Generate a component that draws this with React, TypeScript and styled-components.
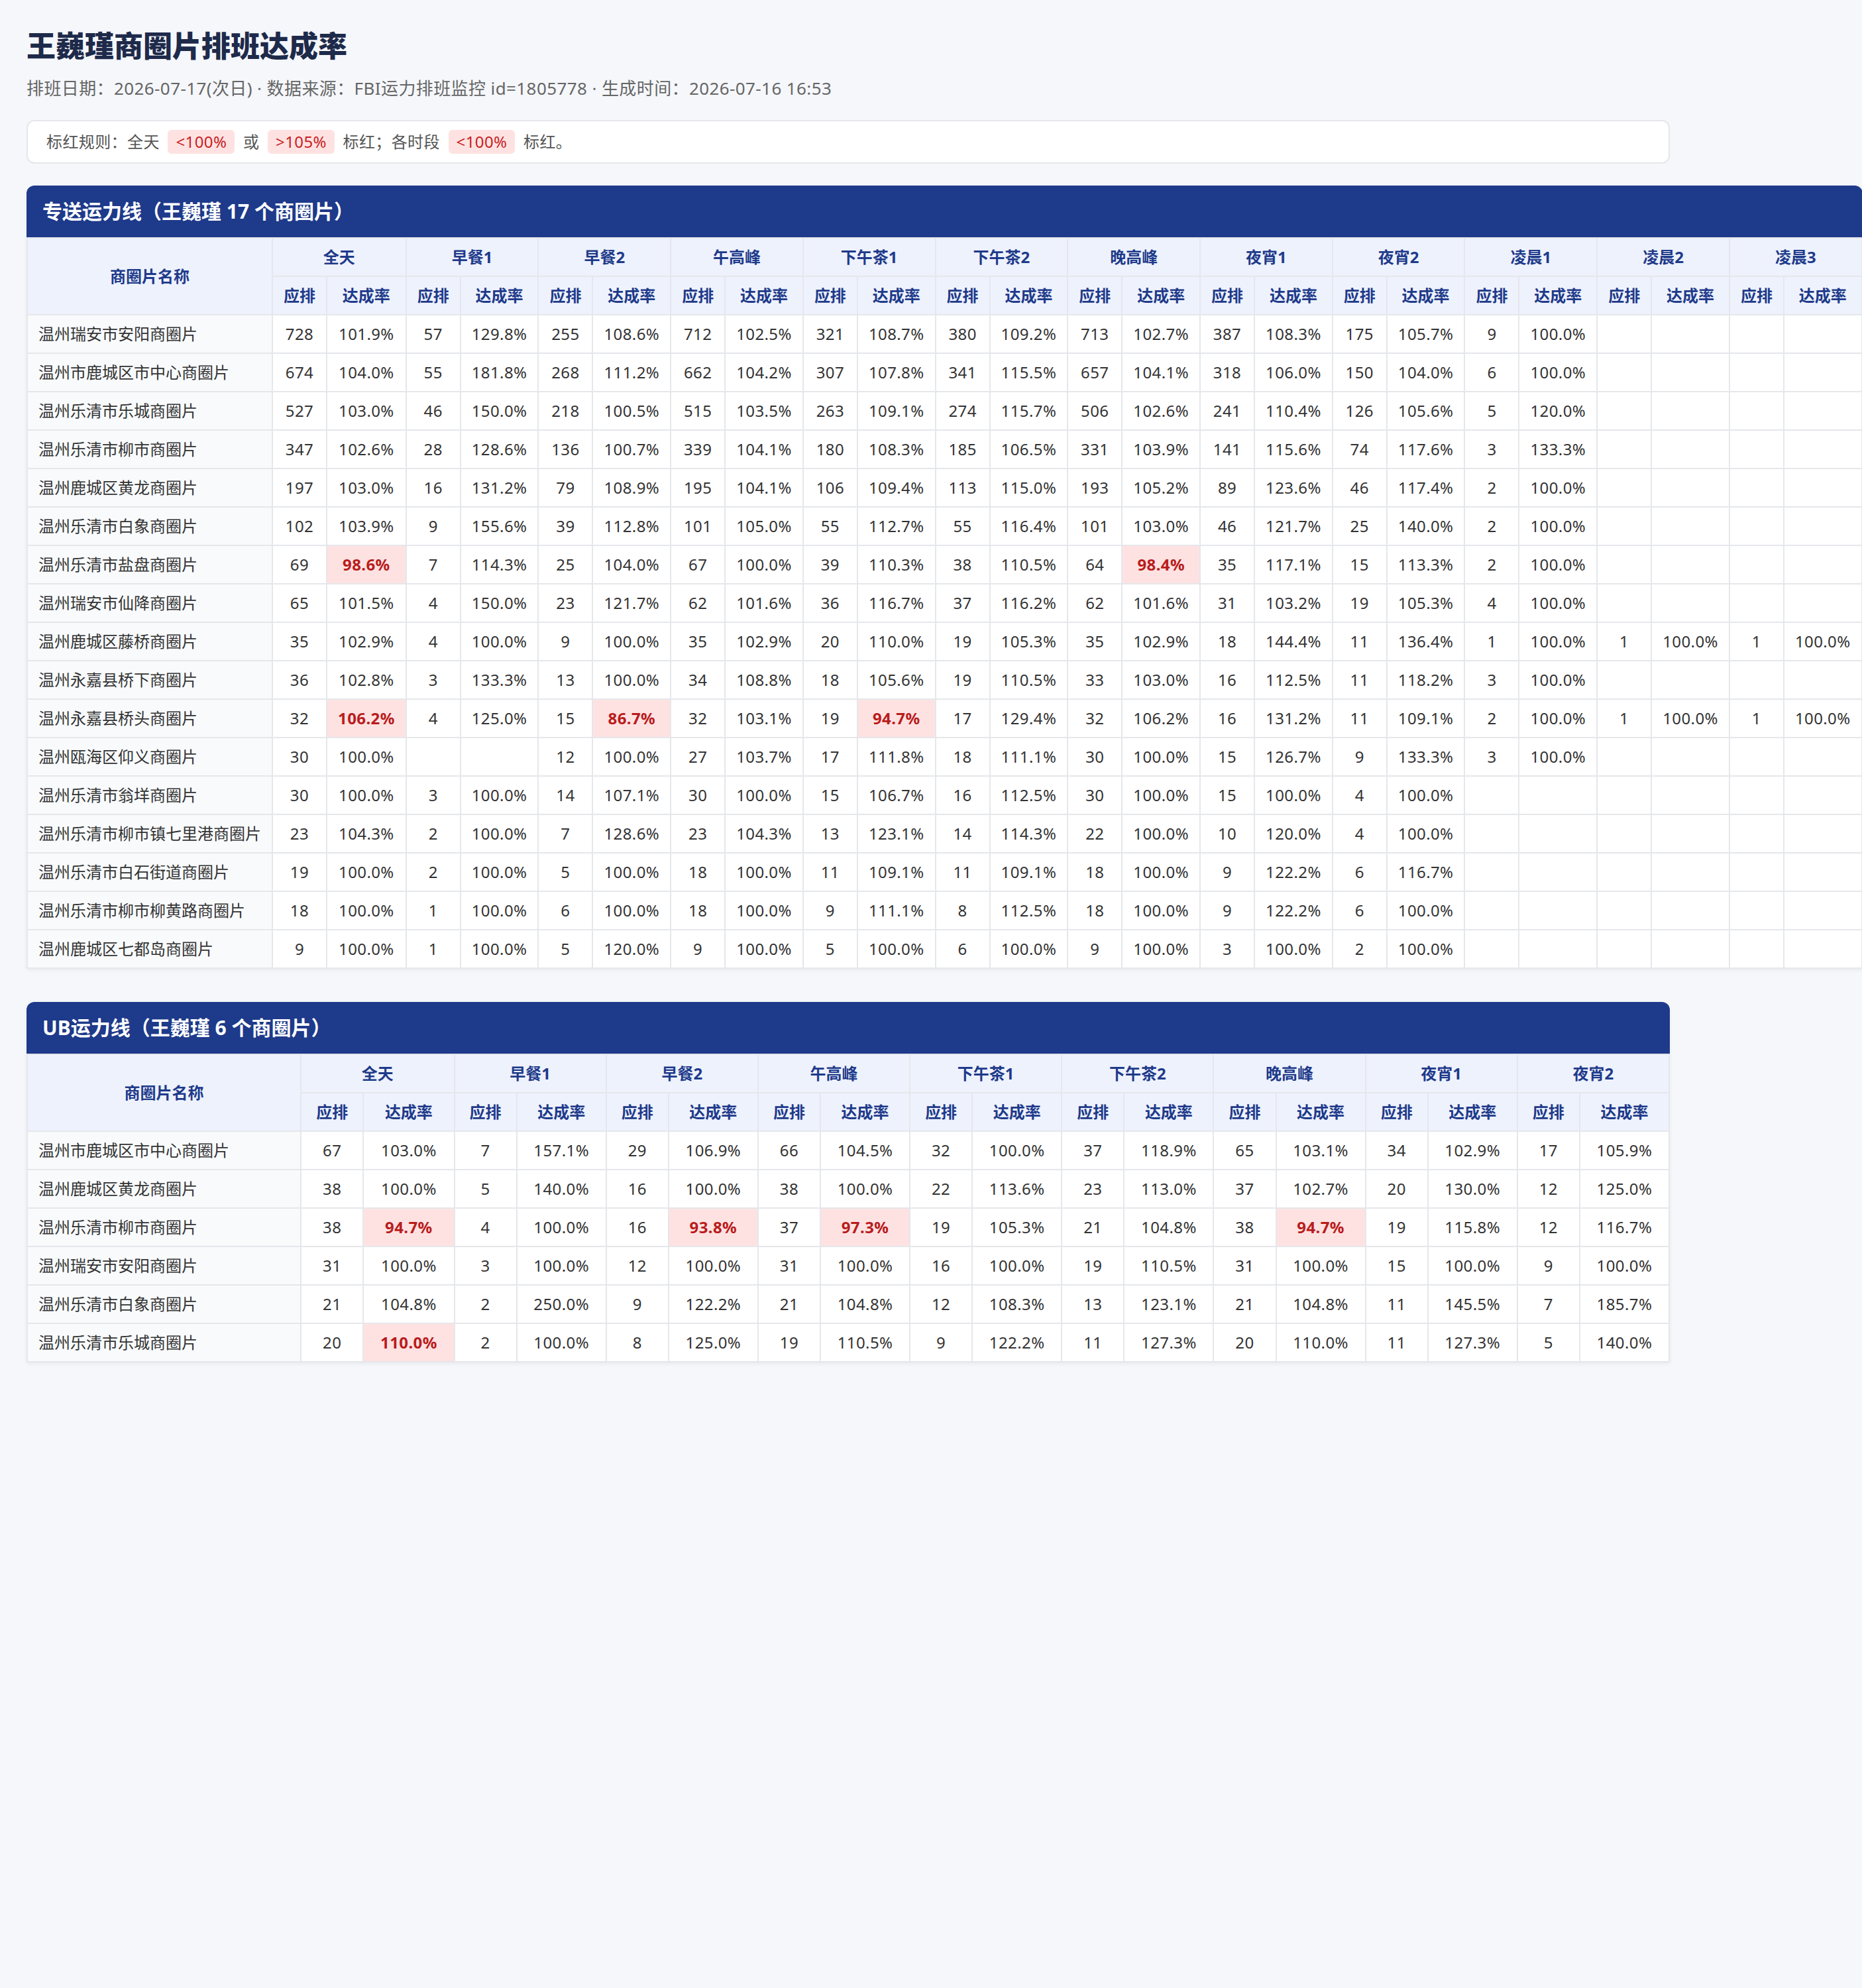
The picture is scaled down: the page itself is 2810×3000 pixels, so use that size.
import React from "react";
import styled, { createGlobalStyle } from "styled-components";

const GlobalStyle = createGlobalStyle`
    body {
        margin: 0;
        background: #f5f7fb;
        font-family: "Noto Sans", "Noto Sans CJK SC", sans-serif;
        color: #333;
    }
`;

const Page = styled.div`
    padding: 40px;
    max-width: 2480px;
`;

const Title = styled.h1`
    margin: 0;
    font-size: 44px;
    line-height: 58px;
    font-weight: 800;
    color: #1e2a4a;
`;

const Sub = styled.div`
    margin-top: 16px;
    font-size: 26px;
    line-height: 39px;
    letter-spacing: 0.4px;
    color: #666;
`;

const Legend = styled.div`
    margin-top: 28px;
    background: #fff;
    border: 2px solid #e5e7eb;
    border-radius: 12px;
    padding: 13px 28px;
    font-size: 24px;
    line-height: 36px;
    letter-spacing: 0.4px;
    color: #555;
`;

const Pill = styled.span`
    display: inline-block;
    margin: 0 6px;
    padding: 0 12px;
    border-radius: 6px;
    background: #fee2e2;
    color: #c81e1e;
`;

const Card = styled.section`
    margin-top: 33px;
    width: max-content;
    min-width: 100%;
    background: #fff;
    border-radius: 12px 12px 0 0;
    box-shadow: 0 2px 6px rgba(15, 23, 42, 0.06);
    & + & {
        margin-top: 50px;
    }
`;

const CardHead = styled.div`
    background: #1e3a8a;
    color: #fff;
    font-size: 30px;
    line-height: 46px;
    font-weight: 700;
    padding: 16px 24px;
    border-radius: 12px 12px 0 0;
`;

const Table = styled.table`
    width: 100%;
    border-collapse: collapse;
    font-size: 24px;
    line-height: 36px;
`;

const Th = styled.th`
    background: #eef2fd;
    color: #1e3a8a;
    font-weight: 700;
    text-align: center;
    padding: 10px 16px;
    border: 2px solid #e5e7eb;
    white-space: nowrap;
`;

/* keeps the name column at least this wide without fixing its width */
const NameHeadInner = styled.div`
    min-width: 326px;
`;

const NameCell = styled.td`
    background: #f8fafc;
    text-align: left;
    padding: 10px 16px;
    border: 2px solid #e5e7eb;
    white-space: nowrap;
    color: #333;
`;

const Td = styled.td<{ $bad?: boolean }>`
    text-align: center;
    padding: 10px 16px;
    border: 2px solid #e5e7eb;
    white-space: nowrap;
    letter-spacing: 0.4px;
    background: ${(p) => (p.$bad ? "#fee2e2" : "#fff")};
    color: ${(p) => (p.$bad ? "#b91c1c" : "#333")};
    font-weight: ${(p) => (p.$bad ? 700 : 400)};
`;

type Cell = [number, string] | null;
type Row = { name: string; cells: Cell[] };

const c = (n: number, r: string): Cell => [n, r];

const zsSlots = ["全天", "早餐1", "早餐2", "午高峰", "下午茶1", "下午茶2", "晚高峰", "夜宵1", "夜宵2", "凌晨1", "凌晨2", "凌晨3"];
const ubSlots = ["全天", "早餐1", "早餐2", "午高峰", "下午茶1", "下午茶2", "晚高峰", "夜宵1", "夜宵2"];

const zsRows: Row[] = [
    { name: "温州瑞安市安阳商圈片", cells: [c(728, "101.9"), c(57, "129.8"), c(255, "108.6"), c(712, "102.5"), c(321, "108.7"), c(380, "109.2"), c(713, "102.7"), c(387, "108.3"), c(175, "105.7"), c(9, "100.0"), null, null] },
    { name: "温州市鹿城区市中心商圈片", cells: [c(674, "104.0"), c(55, "181.8"), c(268, "111.2"), c(662, "104.2"), c(307, "107.8"), c(341, "115.5"), c(657, "104.1"), c(318, "106.0"), c(150, "104.0"), c(6, "100.0"), null, null] },
    { name: "温州乐清市乐城商圈片", cells: [c(527, "103.0"), c(46, "150.0"), c(218, "100.5"), c(515, "103.5"), c(263, "109.1"), c(274, "115.7"), c(506, "102.6"), c(241, "110.4"), c(126, "105.6"), c(5, "120.0"), null, null] },
    { name: "温州乐清市柳市商圈片", cells: [c(347, "102.6"), c(28, "128.6"), c(136, "100.7"), c(339, "104.1"), c(180, "108.3"), c(185, "106.5"), c(331, "103.9"), c(141, "115.6"), c(74, "117.6"), c(3, "133.3"), null, null] },
    { name: "温州鹿城区黄龙商圈片", cells: [c(197, "103.0"), c(16, "131.2"), c(79, "108.9"), c(195, "104.1"), c(106, "109.4"), c(113, "115.0"), c(193, "105.2"), c(89, "123.6"), c(46, "117.4"), c(2, "100.0"), null, null] },
    { name: "温州乐清市白象商圈片", cells: [c(102, "103.9"), c(9, "155.6"), c(39, "112.8"), c(101, "105.0"), c(55, "112.7"), c(55, "116.4"), c(101, "103.0"), c(46, "121.7"), c(25, "140.0"), c(2, "100.0"), null, null] },
    { name: "温州乐清市盐盘商圈片", cells: [c(69, "98.6"), c(7, "114.3"), c(25, "104.0"), c(67, "100.0"), c(39, "110.3"), c(38, "110.5"), c(64, "98.4"), c(35, "117.1"), c(15, "113.3"), c(2, "100.0"), null, null] },
    { name: "温州瑞安市仙降商圈片", cells: [c(65, "101.5"), c(4, "150.0"), c(23, "121.7"), c(62, "101.6"), c(36, "116.7"), c(37, "116.2"), c(62, "101.6"), c(31, "103.2"), c(19, "105.3"), c(4, "100.0"), null, null] },
    { name: "温州鹿城区藤桥商圈片", cells: [c(35, "102.9"), c(4, "100.0"), c(9, "100.0"), c(35, "102.9"), c(20, "110.0"), c(19, "105.3"), c(35, "102.9"), c(18, "144.4"), c(11, "136.4"), c(1, "100.0"), c(1, "100.0"), c(1, "100.0")] },
    { name: "温州永嘉县桥下商圈片", cells: [c(36, "102.8"), c(3, "133.3"), c(13, "100.0"), c(34, "108.8"), c(18, "105.6"), c(19, "110.5"), c(33, "103.0"), c(16, "112.5"), c(11, "118.2"), c(3, "100.0"), null, null] },
    { name: "温州永嘉县桥头商圈片", cells: [c(32, "106.2"), c(4, "125.0"), c(15, "86.7"), c(32, "103.1"), c(19, "94.7"), c(17, "129.4"), c(32, "106.2"), c(16, "131.2"), c(11, "109.1"), c(2, "100.0"), c(1, "100.0"), c(1, "100.0")] },
    { name: "温州瓯海区仰义商圈片", cells: [c(30, "100.0"), null, c(12, "100.0"), c(27, "103.7"), c(17, "111.8"), c(18, "111.1"), c(30, "100.0"), c(15, "126.7"), c(9, "133.3"), c(3, "100.0"), null, null] },
    { name: "温州乐清市翁垟商圈片", cells: [c(30, "100.0"), c(3, "100.0"), c(14, "107.1"), c(30, "100.0"), c(15, "106.7"), c(16, "112.5"), c(30, "100.0"), c(15, "100.0"), c(4, "100.0"), null, null, null] },
    { name: "温州乐清市柳市镇七里港商圈片", cells: [c(23, "104.3"), c(2, "100.0"), c(7, "128.6"), c(23, "104.3"), c(13, "123.1"), c(14, "114.3"), c(22, "100.0"), c(10, "120.0"), c(4, "100.0"), null, null, null] },
    { name: "温州乐清市白石街道商圈片", cells: [c(19, "100.0"), c(2, "100.0"), c(5, "100.0"), c(18, "100.0"), c(11, "109.1"), c(11, "109.1"), c(18, "100.0"), c(9, "122.2"), c(6, "116.7"), null, null, null] },
    { name: "温州乐清市柳市柳黄路商圈片", cells: [c(18, "100.0"), c(1, "100.0"), c(6, "100.0"), c(18, "100.0"), c(9, "111.1"), c(8, "112.5"), c(18, "100.0"), c(9, "122.2"), c(6, "100.0"), null, null, null] },
    { name: "温州鹿城区七都岛商圈片", cells: [c(9, "100.0"), c(1, "100.0"), c(5, "120.0"), c(9, "100.0"), c(5, "100.0"), c(6, "100.0"), c(9, "100.0"), c(3, "100.0"), c(2, "100.0"), null, null, null] },
];

const ubRows: Row[] = [
    { name: "温州市鹿城区市中心商圈片", cells: [c(67, "103.0"), c(7, "157.1"), c(29, "106.9"), c(66, "104.5"), c(32, "100.0"), c(37, "118.9"), c(65, "103.1"), c(34, "102.9"), c(17, "105.9")] },
    { name: "温州鹿城区黄龙商圈片", cells: [c(38, "100.0"), c(5, "140.0"), c(16, "100.0"), c(38, "100.0"), c(22, "113.6"), c(23, "113.0"), c(37, "102.7"), c(20, "130.0"), c(12, "125.0")] },
    { name: "温州乐清市柳市商圈片", cells: [c(38, "94.7"), c(4, "100.0"), c(16, "93.8"), c(37, "97.3"), c(19, "105.3"), c(21, "104.8"), c(38, "94.7"), c(19, "115.8"), c(12, "116.7")] },
    { name: "温州瑞安市安阳商圈片", cells: [c(31, "100.0"), c(3, "100.0"), c(12, "100.0"), c(31, "100.0"), c(16, "100.0"), c(19, "110.5"), c(31, "100.0"), c(15, "100.0"), c(9, "100.0")] },
    { name: "温州乐清市白象商圈片", cells: [c(21, "104.8"), c(2, "250.0"), c(9, "122.2"), c(21, "104.8"), c(12, "108.3"), c(13, "123.1"), c(21, "104.8"), c(11, "145.5"), c(7, "185.7")] },
    { name: "温州乐清市乐城商圈片", cells: [c(20, "110.0"), c(2, "100.0"), c(8, "125.0"), c(19, "110.5"), c(9, "122.2"), c(11, "127.3"), c(20, "110.0"), c(11, "127.3"), c(5, "140.0")] },
];

// 全天: <100% 或 >105% 标红; 各时段: <100% 标红
function isBad(rate: string, slot: number) {
    const v = parseFloat(rate);
    if (slot === 0) return v < 100 || v > 105;
    return v < 100;
}

function RateTable({ title, slots, rows }: { title: string; slots: string[]; rows: Row[] }) {
    return (
        <Card>
            <CardHead>{title}</CardHead>
            <Table>
                <thead>
                    <tr>
                        <Th rowSpan={2}>
                            <NameHeadInner>商圈片名称</NameHeadInner>
                        </Th>
                        {slots.map((s) => (
                            <Th key={s} colSpan={2}>
                                {s}
                            </Th>
                        ))}
                    </tr>
                    <tr>
                        {slots.map((s) => (
                            <React.Fragment key={s}>
                                <Th>应排</Th>
                                <Th>达成率</Th>
                            </React.Fragment>
                        ))}
                    </tr>
                </thead>
                <tbody>
                    {rows.map((r) => (
                        <tr key={r.name}>
                            <NameCell>{r.name}</NameCell>
                            {r.cells.map((cell, i) =>
                                cell ? (
                                    <React.Fragment key={i}>
                                        <Td>{cell[0]}</Td>
                                        <Td $bad={isBad(cell[1], i)}>{cell[1]}%</Td>
                                    </React.Fragment>
                                ) : (
                                    <React.Fragment key={i}>
                                        <Td />
                                        <Td />
                                    </React.Fragment>
                                )
                            )}
                        </tr>
                    ))}
                </tbody>
            </Table>
        </Card>
    );
}

export default function App() {
    return (
        <>
            <GlobalStyle />
            <Page>
                <Title>王巍瑾商圈片排班达成率</Title>
                <Sub>排班日期：2026-07-17(次日) · 数据来源：FBI运力排班监控 id=1805778 · 生成时间：2026-07-16 16:53</Sub>
                <Legend>
                    标红规则：全天 <Pill>&lt;100%</Pill> 或 <Pill>&gt;105%</Pill> 标红；各时段 <Pill>&lt;100%</Pill> 标红。
                </Legend>
                <RateTable title="专送运力线（王巍瑾 17 个商圈片）" slots={zsSlots} rows={zsRows} />
                <RateTable title="UB运力线（王巍瑾 6 个商圈片）" slots={ubSlots} rows={ubRows} />
            </Page>
        </>
    );
}
